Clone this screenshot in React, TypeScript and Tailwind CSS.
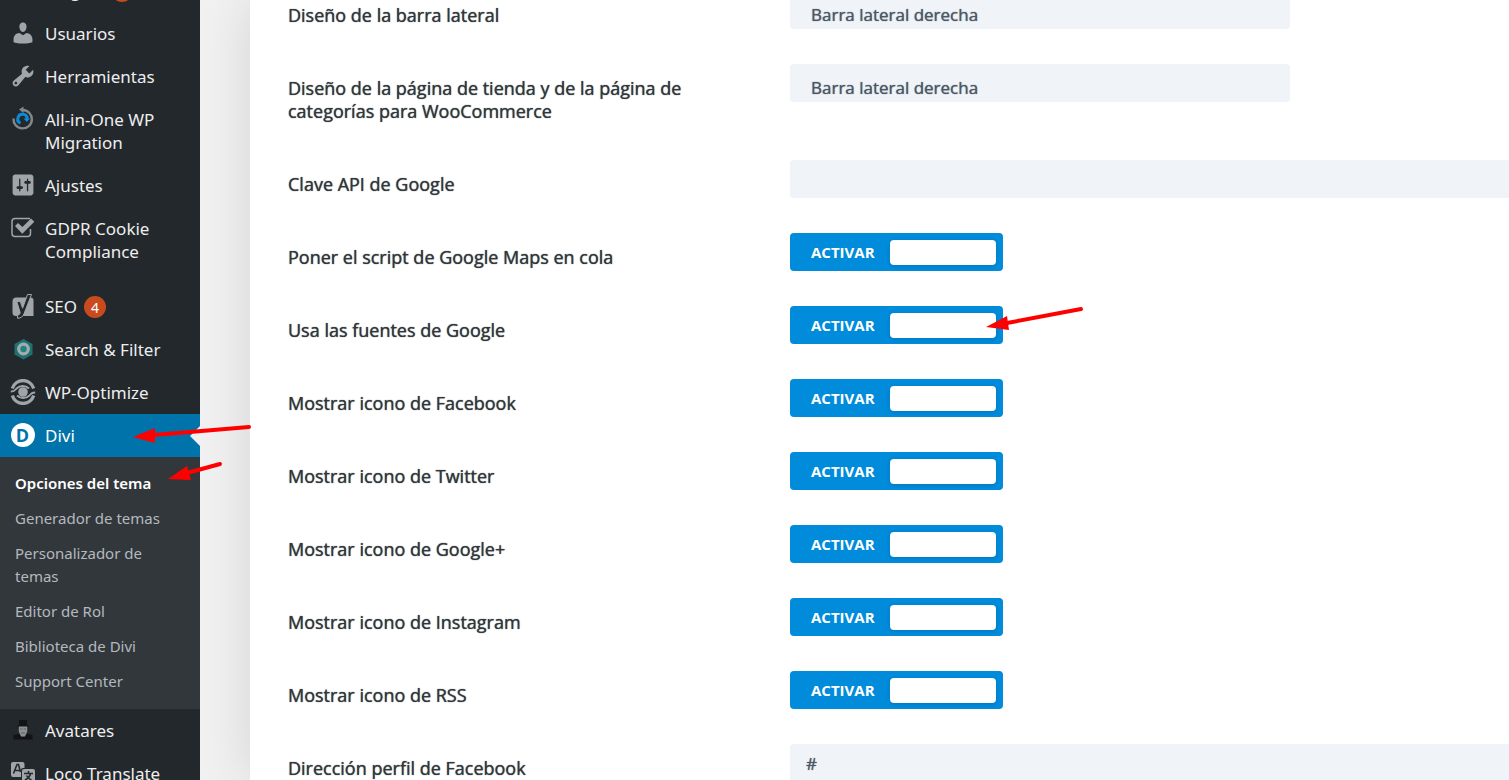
import { useState, type ReactNode } from "react";

type MenuItem = { label: string; icon: ReactNode; badge?: string; gapBefore?: boolean; current?: boolean };

function Dash({ d }: { d: string }) {
  return (
    <svg viewBox="0 0 20 20" className="size-[26px]" fill="currentColor" aria-hidden="true">
      <path fillRule="evenodd" d={d} />
    </svg>
  );
}

const usersPath =
  "M10 9.25c-2.27 0-2.73-3.44-2.73-3.44C7 4.02 7.82 2 9.97 2c2.16 0 2.98 2.02 2.71 3.81 0 0-.41 3.44-2.68 3.44zm0 2.57L12.72 10c2.39 0 4.52 2.33 4.52 4.53v2.49s-3.65 1.13-7.24 1.13c-3.65 0-7.24-1.13-7.24-1.13v-2.49c0-2.25 1.94-4.48 4.47-4.48z";
const toolsPath =
  "M16.68 9.77c-1.34 1.34-3.3 1.67-4.95.99l-5.41 6.52c-.99.99-2.59.99-3.58 0s-.99-2.59 0-3.57l6.52-5.42c-.68-1.65-.35-3.61.99-4.95 1.28-1.28 3.12-1.62 4.72-1.06l-2.89 2.89 2.82 2.82 2.86-2.87c.53 1.58.18 3.39-1.08 4.65zM3.81 16.21c.4.39 1.04.39 1.43 0 .4-.4.4-1.04 0-1.43-.39-.4-1.03-.4-1.43 0-.39.39-.39 1.03 0 1.43z";
const settingsPath =
  "M18 16V4c0-1.1-.9-2-2-2H4c-1.1 0-2 .9-2 2v12c0 1.1.9 2 2 2h12c1.1 0 2-.9 2-2zM8 11h1c.55 0 1 .45 1 1s-.45 1-1 1H8v1.5c0 .28-.22.5-.5.5s-.5-.22-.5-.5V13H6c-.55 0-1-.45-1-1s.45-1 1-1h1V5.5c0-.28.22-.5.5-.5s.5.22.5.5V11zm5-2h-1c-.55 0-1-.45-1-1s.45-1 1-1h1V5.5c0-.28.22-.5.5-.5s.5.22.5.5V7h1c.55 0 1 .45 1 1s-.45 1-1 1h-1v5.5c0 .28-.22.5-.5.5s-.5-.22-.5-.5V9z";
const pluginsPath =
  "M13.11 4.36 9.87 7.6 8 5.73l3.24-3.24c.35-.34 1.05-.2 1.56.32.52.51.66 1.21.31 1.55zm-8 1.77.91-1.12 9.01 9.01-1.19.84c-.71.71-2.63 1.16-3.82 1.16H6.14L4.9 17.26c-.37.37-.98.37-1.36 0-.37-.37-.37-.98 0-1.36l1.24-1.24v-3.88c0-1.19-.38-3.94.33-4.65zm7.26 3.97 3.24-3.24c.34-.35 1.04-.21 1.55.31.52.51.66 1.21.31 1.55l-3.24 3.25z";

function MigrationIcon() {
  return (
    <svg viewBox="0 0 26 26" className="size-[26px]" fill="none" aria-hidden="true">
      <path d="M3.500 12.500A9.200 9.200 0 1 0 13 4" stroke="#82878c" strokeWidth="2.400" />
      <path d="M13.500.5v6.500L9 3.500z" fill="#82878c" />
      <path d="M10.500 17.200A4.700 4.700 0 1 1 17.200 13" stroke="#0e8bd8" strokeWidth="3" />
      <path d="M13.500 12.500h6.500l-3.200 3.600z" fill="#0e8bd8" />
    </svg>
  );
}

function CheckIcon() {
  return (
    <svg viewBox="0 0 26 26" className="size-[26px]" fill="none" aria-hidden="true">
      <path d="M20 3.500H5a3 3 0 0 0-3 3v12a3 3 0 0 0 3 3h12.500a3 3 0 0 0 3-3v-4.500" stroke="currentColor" strokeWidth="1.500" />
      <path d="m5 11 3-3 4.400 4L21 3.500l3.300 3.200-12 12z" fill="currentColor" />
    </svg>
  );
}

function YoastIcon() {
  return (
    <svg viewBox="0 0 26 28" className="h-[28px] w-[26px]" aria-hidden="true">
      <path d="M6.500 5.500h14a3 3 0 0 1 3 3V24H6a3.500 3.500 0 0 1-3.500-3.500v-11a4 4 0 0 1 4-4z" fill="#a0a5aa" />
      <path
        d="M17.500 2.500h4L14.200 21.300c-1.300 3.300-2.900 4.900-6.700 5v-3.100c2-.3 3-1.500 2.500-3.200L6.800 9.500h3.500l2.300 6.700z"
        fill="#23282d"
        stroke="#a0a5aa"
        strokeWidth="1"
      />
    </svg>
  );
}

function FilterIcon() {
  return (
    <svg viewBox="0 0 26 26" className="size-[26px]" aria-hidden="true">
      <path d="m13.500 3 9 5v10.500l-9 5-9-5V8z" fill="#1d7270" />
      <circle cx="13.500" cy="13" r="4.800" fill="#1d8582" stroke="#a7aaad" strokeWidth="3.200" />
    </svg>
  );
}

function OptimizeIcon() {
  return (
    <svg viewBox="0 0 26 26" className="size-[26px]" aria-hidden="true">
      <g fill="none" stroke="currentColor">
        <path d="M2.300 9.500A11.200 11.200 0 0 1 23.700 9.500" strokeWidth="3.400" />
        <path d="M2.300 16.500A11.200 11.200 0 0 0 23.700 16.500" strokeWidth="3.400" />
        <path d="M.8 12.500c4 .2 4.200-1.500 5.700-3a9 9 0 0 1 12.500 0" strokeWidth="1.800" />
        <path d="M25.200 13.500c-4-.2-4.200 1.500-5.700 3a9 9 0 0 1-12.500 0" strokeWidth="1.800" />
      </g>
      <circle cx="13" cy="13" r="4.800" fill="currentColor" />
    </svg>
  );
}

function DiviIcon() {
  return (
    <span className="flex size-6 items-center justify-center rounded-full bg-white font-['Open_Sans',sans-serif] text-[18px] leading-6 font-bold text-[#0073aa]">
      D
    </span>
  );
}

function AvatarIcon() {
  return (
    <svg viewBox="0 0 20 20" className="size-5" aria-hidden="true">
      <path d="M6 0h8v5l3 1.500H3L6 5zM.5 15l5.500-1 4 3 4-3 5.500 1v4.500H.5z" fill="#111316" />
      <path d="M5.800 6.500h8.400v5L12 16.500H8l-2.200-5z" fill="#8c9093" />
      <path d="M7 8.500h2.400v1H7zM10.600 8.500H13v1h-2.400zM8 12.500h4v1H8z" fill="#5c6064" />
    </svg>
  );
}

function TranslateIcon() {
  return (
    <svg viewBox="0 0 26 26" className="size-[26px]" fill="none" aria-hidden="true">
      <path d="M3 2h9.500a2 2 0 0 1 2 2v4H13a2 2 0 0 0-2 2v7H3a2 2 0 0 1-2-2V4a2 2 0 0 1 2-2z" fill="currentColor" />
      <rect x="12" y="9" width="13" height="14" rx="2" fill="currentColor" />
      <path d="m3.500 13.500 3.500-9h1.500l2 7.500M5 10.500h5M14 13.500h9M18.500 11v2.500M15 20c3-1.500 5-3.500 5.500-6.500M16.500 15.500c1 2 3 3.500 5 4.500" stroke="#23282d" strokeWidth="1.600" />
    </svg>
  );
}

const topItems: MenuItem[] = [
  { label: "Plugins", icon: <Dash d={pluginsPath} />, badge: "3" },
  { label: "Usuarios", icon: <Dash d={usersPath} /> },
  { label: "Herramientas", icon: <Dash d={toolsPath} /> },
  { label: "All-in-One WP Migration", icon: <MigrationIcon /> },
  { label: "Ajustes", icon: <Dash d={settingsPath} /> },
  { label: "GDPR Cookie Compliance", icon: <CheckIcon /> },
  { label: "SEO", icon: <YoastIcon />, badge: "4", gapBefore: true },
  { label: "Search & Filter", icon: <FilterIcon /> },
  { label: "WP-Optimize", icon: <OptimizeIcon /> },
  { label: "Divi", icon: <DiviIcon />, current: true },
];

const bottomItems: MenuItem[] = [
  { label: "Avatares", icon: <AvatarIcon /> },
  { label: "Loco Translate", icon: <TranslateIcon /> },
];

const subItems = ["Opciones del tema", "Generador de temas", "Personalizador de temas", "Editor de Rol", "Biblioteca de Divi", "Support Center"];

function MenuLink({ item }: { item: MenuItem }) {
  return (
    <li className={item.gapBefore ? "mt-3" : ""}>
      <a
        href="#"
        className={
          item.current
            ? "relative flex bg-[#0073aa] text-white"
            : "relative flex text-[#eeeeee]"
        }
      >
        <span className="flex h-[42px] w-[45px] shrink-0 items-center justify-center text-[#a0a5aa]">{item.icon}</span>
        <span className="max-w-[130px] py-[10px] text-[17px] leading-[23px]">{item.label}</span>
        {item.badge && (
          <span className="mt-[11px] ml-[7px] flex size-[22px] items-center justify-center rounded-full bg-[#ca4a1f] text-[14px] text-white">{item.badge}</span>
        )}
        {item.current && (
          <svg viewBox="0 0 10 20" className="absolute top-3 right-0 h-5 w-[10px]" aria-hidden="true">
            <path d="M10 0v20L0 10z" fill="#f1f1f1" />
          </svg>
        )}
      </a>
    </li>
  );
}

function Sidebar() {
  return (
    <nav className="w-[200px] shrink-0 bg-[#23282d] font-['Noto_Sans',sans-serif]">
      <ul className="-mt-[31px]">
        {topItems.map((item) => (
          <MenuLink key={item.label} item={item} />
        ))}
        <li>
          <ul className="bg-[#32373c] pt-[9px] pb-[10px] text-[15px] leading-[23px]">
            {subItems.map((label, i) => (
              <li key={label}>
                <a href="#" className={i === 0 ? "block px-[15px] py-[6px] font-semibold text-white" : "block px-[15px] py-[6px] text-[#b4b9be]"}>
                  {label}
                </a>
              </li>
            ))}
          </ul>
        </li>
        {bottomItems.map((item) => (
          <MenuLink key={item.label} item={item} />
        ))}
      </ul>
    </nav>
  );
}

type Field = { id: string; label: string; kind: "select" | "text" | "toggle"; value?: string };

const fields: Field[] = [
  { id: "sidebar", label: "Diseño de la barra lateral", kind: "select", value: "Barra lateral derecha" },
  { id: "shop", label: "Diseño de la página de tienda y de la página de categorías para WooCommerce", kind: "select", value: "Barra lateral derecha" },
  { id: "api", label: "Clave API de Google", kind: "text", value: "" },
  { id: "maps", label: "Poner el script de Google Maps en cola", kind: "toggle" },
  { id: "fonts", label: "Usa las fuentes de Google", kind: "toggle" },
  { id: "facebook", label: "Mostrar icono de Facebook", kind: "toggle" },
  { id: "twitter", label: "Mostrar icono de Twitter", kind: "toggle" },
  { id: "google", label: "Mostrar icono de Google+", kind: "toggle" },
  { id: "instagram", label: "Mostrar icono de Instagram", kind: "toggle" },
  { id: "rss", label: "Mostrar icono de RSS", kind: "toggle" },
  { id: "profile", label: "Dirección perfil de Facebook", kind: "text", value: "#" },
];

function Toggle({ id }: { id: string }) {
  const [on, setOn] = useState(true);
  return (
    <button
      id={id}
      type="button"
      role="switch"
      aria-checked={on}
      onClick={() => setOn(!on)}
      className="flex h-[38px] w-[213px] items-center justify-between rounded bg-[#008bdb] pr-[7px] pl-[21px] text-[15px] font-bold text-white"
    >
      <span>ACTIVAR</span>
      <span className="h-[25px] w-[106px] rounded bg-white shadow-[0_1px_4px_rgba(0,0,0,0.15)]" />
    </button>
  );
}

function Control({ field }: { field: Field }) {
  if (field.kind === "toggle") return <Toggle id={field.id} />;
  if (field.kind === "select") {
    return (
      <select id={field.id} className="h-[38px] w-[500px] appearance-none rounded bg-[#f0f3f8] px-[21px] pt-[9px] text-[17px] text-[#4c5866] [text-shadow:0_0_1px_#4c5866]">
        <option>{field.value}</option>
      </select>
    );
  }
  return (
    <input
      id={field.id}
      type="text"
      defaultValue={field.value}
      className="h-[38px] min-w-0 flex-1 rounded-l bg-[#f0f3f8] px-4 text-[17px] text-[#4c5866] [text-shadow:0_0_1px_#4c5866]"
    />
  );
}

function Arrow({ className, size, line, head }: { className: string; size: string; line: string; head: string }) {
  return (
    <svg viewBox={size} className={className} fill="none" aria-hidden="true">
      <path d={line} stroke="#ff0000" strokeWidth="4" strokeLinecap="round" />
      <path d={head} fill="#ff0000" />
    </svg>
  );
}

export default function App() {
  return (
    <div className="relative flex h-screen overflow-hidden bg-[#f1f1f1] font-['Open_Sans',sans-serif]">
      <Sidebar />
      <main className="ml-[50px] min-w-0 flex-1 bg-white pl-[38px] shadow-[0_0_50px_rgba(0,0,0,0.12)] [clip-path:inset(0_0_0_-50px)]">
        <form className="-mt-[9px] flex flex-col gap-[35px]">
          {fields.map((field) => (
            <div key={field.id} className="flex items-start">
              <div className="w-[502px] shrink-0 pt-[13px] pb-[2px]">
                <label htmlFor={field.id} className="block max-w-[420px] text-[18px] leading-[23px] text-[#32373c] [text-shadow:0_0_1px_#32373c]">
                  {field.label}
                </label>
              </div>
              <Control field={field} />
            </div>
          ))}
        </form>
      </main>
      <Arrow className="pointer-events-none absolute top-[424px] left-[132px] h-[20px] w-[120px]" size="0 0 120 20" line="M22 11 117 3" head="M1 13 23 4v15z" />
      <Arrow className="pointer-events-none absolute top-[460px] left-[167px] h-[22px] w-[56px]" size="0 0 56 22" line="M20 13 53 4" head="M1 19 20 6l4 14z" />
      <Arrow className="pointer-events-none absolute top-[305px] left-[985px] h-[26px] w-[100px]" size="0 0 100 26" line="M22 18 96 4" head="M1 22 22 11l2 14z" />
    </div>
  );
}
